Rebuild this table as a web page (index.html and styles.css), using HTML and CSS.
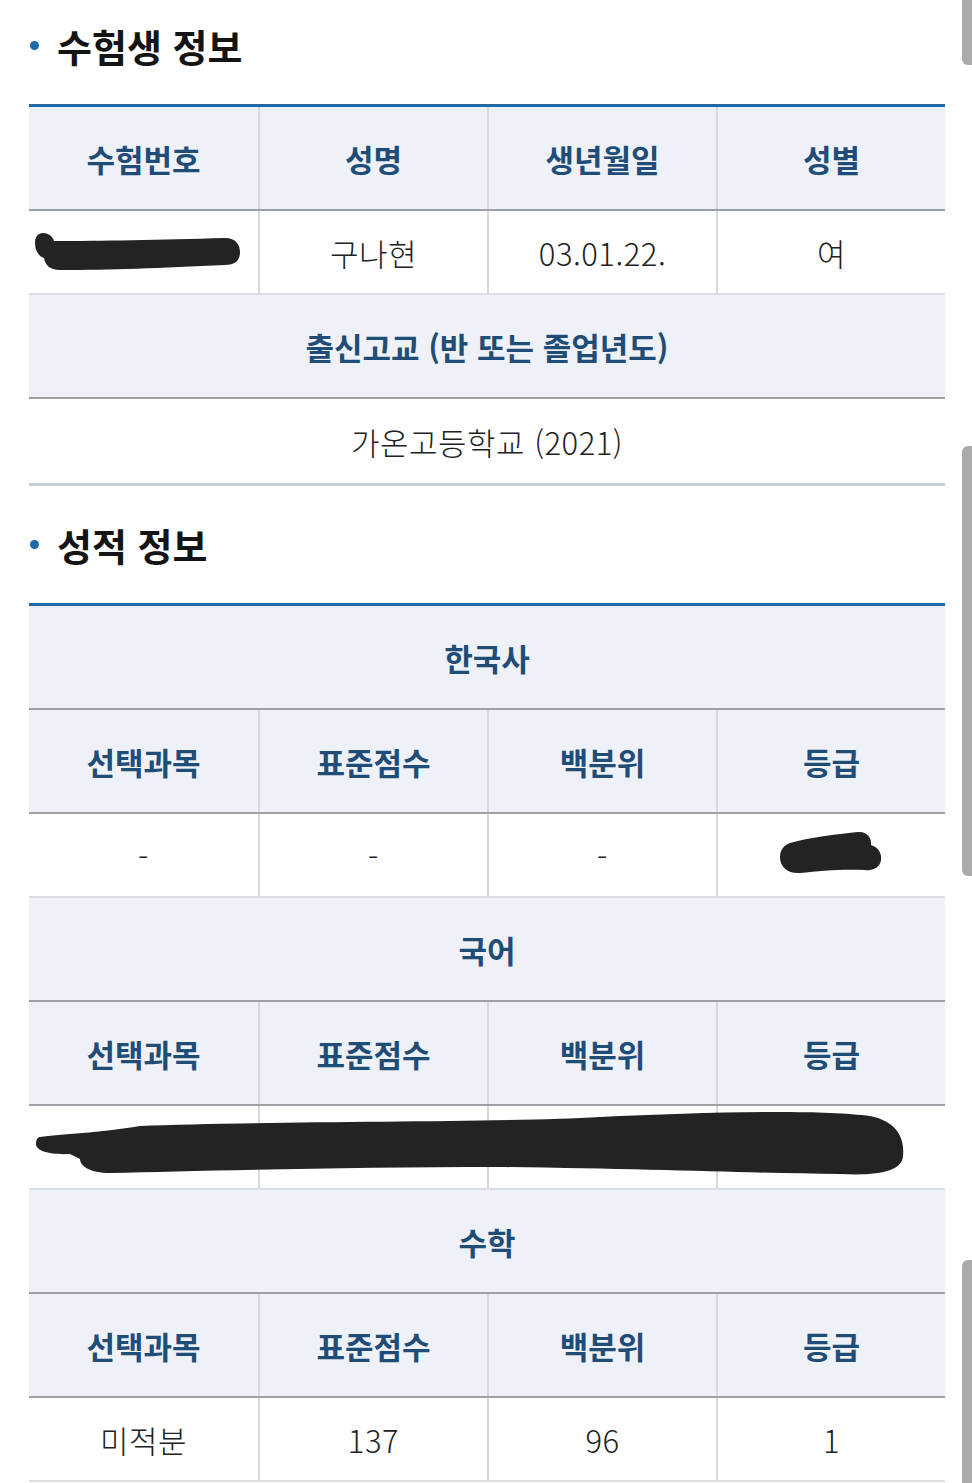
FILE: index.html
```html
<!DOCTYPE html>
<html lang="ko">
<head>
<meta charset="utf-8">
<title>수험생 정보</title>
<link rel="stylesheet" href="styles.css">
</head>
<body>
<div class="page">
  <h2 class="sec-title first"><span class="dot"></span>수험생 정보</h2>
  <div class="tbl">
    <div class="row head four">
      <div class="cell">수험번호</div>
      <div class="cell">성명</div>
      <div class="cell">생년월일</div>
      <div class="cell">성별</div>
    </div>
    <div class="row data four">
      <div class="cell"></div>
      <div class="cell">구나현</div>
      <div class="cell">03.01.22.</div>
      <div class="cell">여</div>
      <svg class="redact" viewBox="29 211 916 82" width="916" height="82"><path d="M43 233 C49 233 53 237 54 241 C100 241 160 240 225 238 C236 238 240 245 240 252 C240 262 233 265 225 265 C160 268 110 270 60 270 C50 270 45 265 44 258 C38 256 35 250 35 243 C35 237 38 233 43 233 Z"/></svg>
    </div>
    <div class="row head one">
      <div class="cell">출신고교 (반 또는 졸업년도)</div>
    </div>
    <div class="row data one last">
      <div class="cell">가온고등학교 (2021)</div>
    </div>
  </div>

  <h2 class="sec-title second"><span class="dot"></span>성적 정보</h2>
  <div class="tbl">
    <div class="row head one"><div class="cell">한국사</div></div>
    <div class="row head four">
      <div class="cell">선택과목</div>
      <div class="cell">표준점수</div>
      <div class="cell">백분위</div>
      <div class="cell">등급</div>
    </div>
    <div class="row data four">
      <div class="cell">-</div>
      <div class="cell">-</div>
      <div class="cell">-</div>
      <div class="cell"></div>
      <svg class="redact" viewBox="29 813 916 82" width="916" height="82"><path d="M790 842 C810 836 840 833 858 831 C866 830 872 836 871 844 C878 846 882 852 881 859 C880 867 872 870 865 869 C840 868 820 870 800 872 C788 873 780 866 780 856 C780 849 784 844 790 842 Z"/></svg>
    </div>
    <div class="row head one"><div class="cell">국어</div></div>
    <div class="row head four">
      <div class="cell">선택과목</div>
      <div class="cell">표준점수</div>
      <div class="cell">백분위</div>
      <div class="cell">등급</div>
    </div>
    <div class="row data four">
      <div class="cell"></div>
      <div class="cell"></div>
      <div class="cell"></div>
      <div class="cell"></div>
      <svg class="redact" viewBox="29 1105 916 82" width="916" height="82"><path d="M40 1136 C60 1133 100 1132 140 1125 C250 1120 500 1122 600 1116 C700 1111 820 1108 870 1115 C895 1120 905 1135 903 1155 C902 1170 880 1175 840 1173 C750 1172 650 1168 500 1166 C350 1166 200 1170 110 1172 C90 1172 80 1165 80 1158 L70 1153 C50 1154 36 1150 36 1143 C36 1138 38 1136 40 1136 Z"/></svg>
    </div>
    <div class="row head one"><div class="cell">수학</div></div>
    <div class="row head four">
      <div class="cell">선택과목</div>
      <div class="cell">표준점수</div>
      <div class="cell">백분위</div>
      <div class="cell">등급</div>
    </div>
    <div class="row data four">
      <div class="cell">미적분</div>
      <div class="cell">137</div>
      <div class="cell">96</div>
      <div class="cell">1</div>
    </div>
  </div>
</div>
<div class="scrollbar bar1"></div>
<div class="scrollbar bar2"></div>
<div class="scrollbar bar3"></div>
</body>
</html>
```

FILE: styles.css
```css
html, body {
  margin: 0;
  padding: 0;
  background: #ffffff;
}
body {
  font-family: "Noto Sans CJK KR", "Noto Sans", sans-serif;
  color: #222222;
  overflow: hidden;
}
.page {
  padding: 0 27px 0 29px;
}
.sec-title {
  display: flex;
  align-items: center;
  height: 90px;
  margin: 0 0 14px 0;
  font-size: 38px;
  font-weight: 700;
  color: #141414;
  letter-spacing: 0;
}
.sec-title.second {
  margin-top: 13px;
}
.dot {
  width: 9px;
  height: 9px;
  border-radius: 50%;
  background: #1b6aa9;
  margin: 0 18px 0 1px;
  flex: none;
}
.tbl {
  border-top: 3px solid #1e69a6;
}
.row {
  position: relative;
  display: grid;
  box-sizing: border-box;
}
.row.four {
  grid-template-columns: repeat(4, 1fr);
}
.row.one {
  grid-template-columns: 1fr;
}
.row.head {
  height: 104px;
  background: #eef2f8;
  border-bottom: 2px solid #9da1a6;
}
.row.data {
  height: 84px;
  background: #ffffff;
  border-bottom: 2px solid #dcdee2;
}
.row.data.last {
  height: 87px;
  border-bottom: 3px solid #c9ced6;
}
.cell {
  display: flex;
  align-items: center;
  justify-content: center;
  box-sizing: border-box;
}
.row.four .cell + .cell {
  border-left: 2px solid #d5d8dc;
}
.row.head .cell {
  font-size: 31px;
  font-weight: 700;
  color: #1f4d77;
}
.row.data .cell {
  font-size: 31px;
  font-weight: 300;
  letter-spacing: 0.5px;
  color: #222222;
}
.redact {
  position: absolute;
  left: 0;
  top: 0;
  fill: #232323;
}
.scrollbar {
  position: absolute;
  right: 0;
  width: 10px;
  background: #aaaaaa;
  border-radius: 6px 0 0 6px;
}
.bar1 {
  top: 0;
  height: 65px;
  border-radius: 0 0 0 6px;
}
.bar2 {
  top: 446px;
  height: 430px;
}
.bar3 {
  top: 1260px;
  height: 223px;
  border-radius: 6px 0 0 0;
}
```
